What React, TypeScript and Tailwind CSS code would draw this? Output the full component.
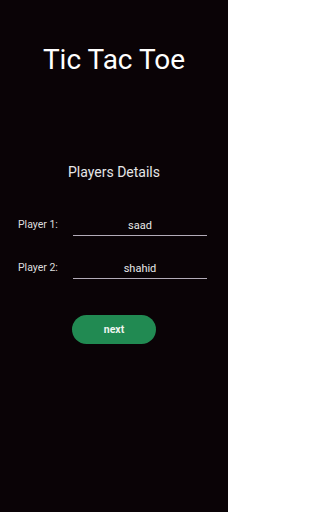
export default function App() {
  return (
    <div className="w-[228px] h-[512px] bg-[#0a0306] flex flex-col items-center font-['Roboto',sans-serif] text-white">
      <h1 className="mt-[42px] text-[28px] leading-[36px] text-white">Tic Tac Toe</h1>
      <h2 className="mt-[84px] text-[14px] leading-[20px] text-[#e6e6e6]">Players Details</h2>

      <div className="mt-[36px] w-full flex flex-col gap-[25px] pl-[18px] pr-[21px]">
        <div className="flex items-end">
          <span className="w-[55px] text-[10.5px] leading-[14px] pb-[4px] text-[#dedede]">Player 1:</span>
          <div className="flex-1 border-b border-[#b3abb8] text-center text-[11px] leading-[14px] pb-[2px] text-[#e8e8e8]">
            saad
          </div>
        </div>
        <div className="flex items-end">
          <span className="w-[55px] text-[10.5px] leading-[14px] pb-[4px] text-[#dedede]">Player 2:</span>
          <div className="flex-1 border-b border-[#b3abb8] text-center text-[11px] leading-[14px] pb-[2px] text-[#e8e8e8]">
            shahid
          </div>
        </div>
      </div>

      <button className="mt-[36px] w-[84px] h-[29px] rounded-full bg-[#218a52] text-[10.5px] font-bold text-[#eef5f0]">
        next
      </button>
    </div>
  );
}
